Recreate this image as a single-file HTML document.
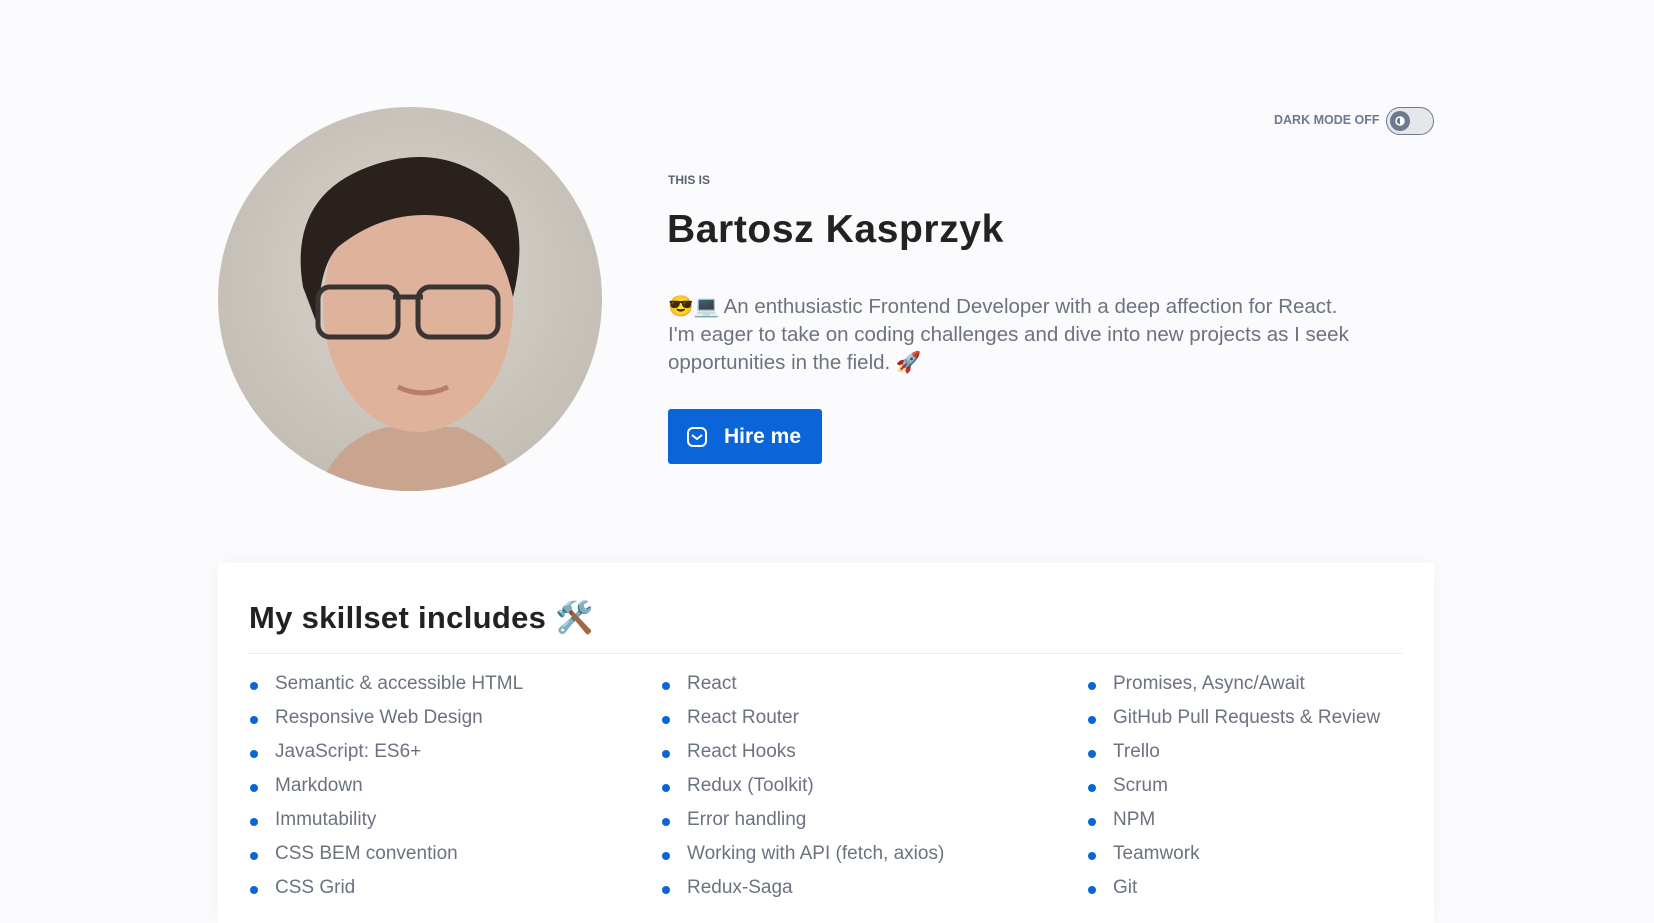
<!DOCTYPE html>
<html><head><meta charset="utf-8"><style>
*{box-sizing:border-box;margin:0;padding:0}
body{width:1654px;height:903px;overflow:hidden;background:#fbfbfe;font-family:"Liberation Sans",sans-serif;position:relative}
.toggle-l{position:absolute;left:1274px;top:113px;font-size:12.5px;font-weight:bold;color:#6b7a8f;letter-spacing:0}
.toggle{position:absolute;left:1386px;top:107px;width:48px;height:28px;border:1px solid #6b7a8f;border-radius:14px;background:#e6e7ea}
.knob{position:absolute;left:3px;top:3px;width:20px;height:20px;border-radius:50%;background:#6b7a8f}
.photo{position:absolute;left:218px;top:107px;width:384px;height:384px;border-radius:50%;overflow:hidden;background:radial-gradient(circle at 50% 45%,#d9d5ce,#bcb6ac)}
.small{position:absolute;left:668px;top:173px;font-size:12px;font-weight:bold;color:#5a6270}
h1{position:absolute;left:667px;top:208px;font-size:39px;font-weight:bold;color:#222;letter-spacing:0.6px}
.p{position:absolute;left:668px;top:293px;width:700px;font-size:20.5px;line-height:28px;color:#6b7280}
.btn{position:absolute;left:668px;top:409px;width:154px;height:55px;background:#0a66d8;border-radius:3px;color:#fff;font-size:21px;font-weight:bold;display:flex;align-items:center;padding-left:56px}
.btn svg{position:absolute;left:18px;top:17px}
.card{position:absolute;left:218px;top:563px;width:1216px;height:360px;background:#fff;box-shadow:0 0 20px rgba(0,0,0,0.04)}
h2{position:absolute;left:249px;top:599px;font-size:31px;font-weight:bold;color:#222;letter-spacing:0.3px}
.hr{position:absolute;left:249px;top:653px;width:1153px;height:1px;background:#ececf0}
ul{position:absolute;list-style:none;top:672px}
li{height:34px;font-size:19px;color:#6b7280;position:relative;padding-left:25px;line-height:24px}
li:before{content:"";position:absolute;left:0;top:10px;width:8px;height:8px;border-radius:50%;background:#0a66d8}
</style></head><body>
<div class="toggle-l">DARK MODE OFF</div>
<div class="toggle"><div class="knob"><svg width="20" height="20" viewBox="0 0 20 20"><circle cx="10" cy="10" r="4" fill="none" stroke="#fff" stroke-width="1.5"/><path d="M10 6a4 4 0 0 1 0 8z" fill="#fff"/></svg></div></div>
<div class="photo"><svg width="384" height="384" viewBox="0 0 384 384">
<path d="M100 384 Q120 330 170 320 L240 320 Q290 340 300 384Z" fill="#c9a48f"/>
<ellipse cx="200" cy="200" rx="95" ry="125" fill="#dfb29c"/>
<path d="M85 180 Q70 90 150 60 Q230 30 290 90 Q310 130 295 190 Q280 120 230 110 Q170 100 120 140 Q100 160 100 220Z" fill="#2a211d"/>
<rect x="100" y="180" width="80" height="50" rx="12" fill="none" stroke="#3a3433" stroke-width="5"/>
<rect x="200" y="180" width="80" height="50" rx="12" fill="none" stroke="#3a3433" stroke-width="5"/>
<path d="M175 190 L205 190" stroke="#3a3433" stroke-width="5"/>
<path d="M180 280 Q205 292 230 280" stroke="#b77e6c" stroke-width="5" fill="none"/>
</svg></div>
<div class="small">THIS IS</div>
<h1>Bartosz Kasprzyk</h1>
<div class="p">😎💻 An enthusiastic Frontend Developer with a deep affection for React. I'm eager to take on coding challenges and dive into new projects as I seek opportunities in the field. 🚀</div>
<div class="btn"><svg width="22" height="22" viewBox="0 0 22 22" fill="none" stroke="#fff" stroke-width="2"><rect x="2" y="2" width="18" height="18" rx="5"/><path d="M6 9l5 4 5-4"/></svg>Hire me</div>
<div class="card"></div>
<h2>My skillset includes 🛠️</h2>
<div class="hr"></div>
<ul style="left:250px"><li>Semantic &amp; accessible HTML</li><li>Responsive Web Design</li><li>JavaScript: ES6+</li><li>Markdown</li><li>Immutability</li><li>CSS BEM convention</li><li>CSS Grid</li></ul>
<ul style="left:662px"><li>React</li><li>React Router</li><li>React Hooks</li><li>Redux (Toolkit)</li><li>Error handling</li><li>Working with API (fetch, axios)</li><li>Redux-Saga</li></ul>
<ul style="left:1088px"><li>Promises, Async/Await</li><li>GitHub Pull Requests &amp; Review</li><li>Trello</li><li>Scrum</li><li>NPM</li><li>Teamwork</li><li>Git</li></ul>
</body></html>
